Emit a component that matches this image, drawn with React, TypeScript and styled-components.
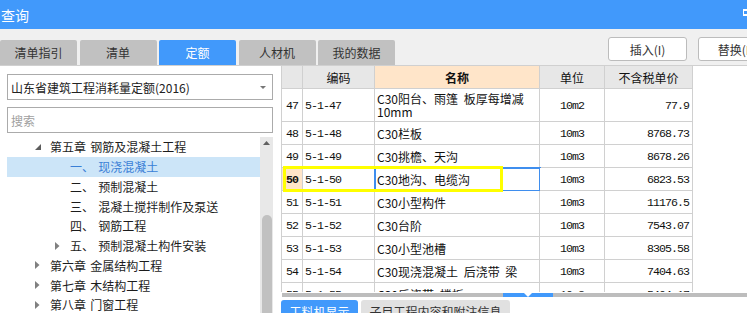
import React from 'react';
import styled, { createGlobalStyle } from 'styled-components';

const BLUE = '#4199fb';
const LINE = '#d0d0d0';

const GlobalStyle = createGlobalStyle`
  html, body {
    margin: 0;
    padding: 0;
  }

  body {
    width: 747px;
    height: 313px;
    overflow: hidden;
    background: #ffffff;
    color: #222222;
    font-family: "Noto Sans CJK SC", "Noto Sans", sans-serif;
    font-size: 12px;
  }

  * {
    box-sizing: border-box;
  }
`;

const Window = styled.div`
  width: 747px;
  height: 313px;
  display: flex;
  flex-direction: column;
  overflow: hidden;
`;

const TitleBar = styled.div`
  height: 29px;
  flex-shrink: 0;
  padding-left: 1px;

  display: flex;
  align-items: center;
  justify-content: space-between;

  background: ${BLUE};
  color: #ffffff;
  font-size: 14px;
`;

const MaxIcon = styled.span`
  width: 10px;
  height: 7px;
  margin-right: -6px;
  margin-bottom: 4px;
  border: 2px solid #ffffff;
  border-left-width: 1px;
`;

const TopBar = styled.div`
  height: 37px;
  flex-shrink: 0;
  padding-top: 11px;

  display: flex;
  align-items: flex-start;

  background: #f0f0f0;
  border-bottom: 1px solid ${LINE};
`;

const TabRow = styled.div`
  display: flex;
  gap: 2.5px;
  align-self: flex-end;
`;

const Tab = styled.div<{ $active?: boolean }>`
  width: 77px;
  height: 25px;

  display: flex;
  align-items: center;
  justify-content: center;

  border-radius: 2px 2px 0 0;
  background: ${(p) => (p.$active ? BLUE : '#c1c1c1')};
  color: ${(p) => (p.$active ? '#ffffff' : '#333333')};
  font-size: 12px;
`;

const ActionGroup = styled.div`
  margin-left: auto;
  margin-right: -30px;
  margin-top: -3px;

  display: flex;
  gap: 11px;
`;

const ActionButton = styled.div`
  width: 79px;
  height: 24px;
  flex-shrink: 0;

  display: flex;
  align-items: center;
  justify-content: center;

  background: #ffffff;
  border: 1px solid #bcbcbc;
  border-radius: 3px;
  color: #333333;
  font-size: 12px;
`;

const Body = styled.div`
  flex: 1;
  min-height: 0;
  display: flex;
`;

const LeftPanel = styled.div`
  width: 281px;
  flex-shrink: 0;
  padding: 8px 8px 0 7px;

  display: flex;
  flex-direction: column;
`;

const InputBox = styled.div<{ $placeholder?: boolean }>`
  height: 26px;
  padding: 0 6px 0 3px;

  display: flex;
  align-items: center;
  justify-content: space-between;

  border: 1px solid #ababab;
  color: ${(p) => (p.$placeholder ? '#a0a0a0' : '#222222')};
  font-size: 12px;
  white-space: nowrap;

  & + & {
    margin-top: 7px;
  }
`;

const Tree = styled.div`
  flex: 1;
  min-height: 0;
  margin-top: 4px;
  display: flex;
`;

const TreeList = styled.div`
  flex: 1;
  display: flex;
  flex-direction: column;
`;

const TreeRow = styled.div<{ $level: number; $selected?: boolean }>`
  height: 19.75px;
  flex-shrink: 0;
  padding-left: ${(p) => 28 + p.$level * 20}px;

  display: flex;
  align-items: center;

  background: ${(p) => (p.$selected ? '#cce5f8' : 'transparent')};
  color: ${(p) => (p.$selected ? '#3a7fd6' : '#1c1c1c')};
  font-size: 12px;
  word-spacing: 1.5px;
  white-space: nowrap;
`;

const Toggle = styled.span`
  width: 15px;
  flex-shrink: 0;
  display: flex;
  align-items: center;
`;

const VScroll = styled.div`
  width: 13px;
  flex-shrink: 0;
  padding-top: 2px;

  display: flex;
  flex-direction: column;
  align-items: center;

  background: #e8e8e8;
`;

const VThumb = styled.div`
  width: 10px;
  flex: 1;
  margin-top: 70px;
  margin-bottom: -10px;
  border-radius: 5px;
  background: #c1c1c1;
`;

const GridPanel = styled.div`
  flex: 1;
  min-width: 0;
  position: relative;

  display: flex;
  flex-direction: column;
`;

const GridView = styled.div`
  height: 226px;
  flex-shrink: 0;
  overflow: hidden;
`;

const GridRow = styled.div<{ $height: number }>`
  height: ${(p) => p.$height}px;
  display: grid;
  grid-template-columns: 22px 72px 165px 65px 88px;
`;

const Cell = styled.div<{
  $bg?: string;
  $align?: 'left' | 'center' | 'right';
  $mono?: boolean;
  $bold?: boolean;
  $focus?: boolean;
  $first?: boolean;
}>`
  padding: 0 ${(p) => (p.$align === 'right' ? '3px' : '1px')} 0 ${(p) => (p.$align === 'left' ? '2px' : '1px')};

  display: flex;
  align-items: center;
  justify-content: ${(p) =>
    p.$align === 'left' ? 'flex-start' : p.$align === 'right' ? 'flex-end' : 'center'};

  background: ${(p) => p.$bg || '#ffffff'};
  border-right: 1px solid ${LINE};
  border-bottom: 1px solid ${LINE};
  border-left: ${(p) => (p.$first ? `1px solid ${LINE}` : 'none')};
  outline: ${(p) => (p.$focus ? '2px solid #3f8eee' : 'none')};
  outline-offset: -1px;

  color: #111111;
  font-family: ${(p) =>
    p.$mono ? '"Liberation Mono", "Noto Sans CJK SC", monospace' : '"Noto Sans CJK SC", sans-serif'};
  font-size: ${(p) => (p.$mono ? '11.6px' : '12px')};
  letter-spacing: ${(p) => (p.$mono ? '-0.95px' : '0')};
  word-spacing: 3px;
  font-weight: ${(p) => (p.$bold ? 700 : 400)};
  line-height: 13px;
  white-space: pre-line;
`;

const HighlightFrame = styled.div`
  position: absolute;
  left: 2px;
  top: 100px;
  width: 220px;
  height: 26px;
  border: 3px solid #ffff00;
  pointer-events: none;
`;

const HScroll = styled.div`
  height: 4px;
  margin-top: 1px;
  margin-left: 1px;
  flex-shrink: 0;
  display: flex;
  background: #bdbdbd;
`;

const HThumb = styled.div`
  width: 50px;
  margin-left: 221px;
  display: flex;
  justify-content: center;
  background: ${BLUE};
`;

const BottomTabs = styled.div`
  margin-top: 3px;
  display: flex;
  gap: 3px;
`;

const BottomTab = styled.div<{ $active?: boolean; $width: number }>`
  width: ${(p) => p.$width}px;
  height: 22px;
  padding-top: 3px;

  display: flex;
  justify-content: center;

  border-radius: 3px 3px 0 0;
  background: ${(p) => (p.$active ? BLUE : '#e1e1e1')};
  color: ${(p) => (p.$active ? '#ffffff' : '#333333')};
  font-size: 12px;
`;

const Expanded = () => (
  <svg width="6" height="6" viewBox="0 0 6 6">
    <path d="M6 0 L6 6 L0 6 Z" fill="#5c5c5c" />
  </svg>
);

const Collapsed = () => (
  <svg width="5" height="8" viewBox="0 0 5 8">
    <path d="M0 0 L4.5 4 L0 8 Z" fill="#808080" />
  </svg>
);

const tabs = ['清单指引', '清单', '定额', '人材机', '我的数据'];

type TreeItem = { level: number; label: string; toggle?: 'open' | 'closed'; selected?: boolean };

const treeItems: TreeItem[] = [
  { level: 0, label: '第五章 钢筋及混凝土工程', toggle: 'open' },
  { level: 1, label: '一、 现浇混凝土', selected: true },
  { level: 1, label: '二、 预制混凝土' },
  { level: 1, label: '三、 混凝土搅拌制作及泵送' },
  { level: 1, label: '四、 钢筋工程' },
  { level: 1, label: '五、 预制混凝土构件安装', toggle: 'closed' },
  { level: 0, label: '第六章 金属结构工程', toggle: 'closed' },
  { level: 0, label: '第七章 木结构工程', toggle: 'closed' },
  { level: 0, label: '第八章 门窗工程', toggle: 'closed' },
];

type Quota = { no: number; code: string; name: string; unit: string; price: string };

const quotas: Quota[] = [
  { no: 47, code: '5-1-47', name: 'C30阳台、雨篷 板厚每增减\n10mm', unit: '10m2', price: '77.9' },
  { no: 48, code: '5-1-48', name: 'C30栏板', unit: '10m3', price: '8768.73' },
  { no: 49, code: '5-1-49', name: 'C30挑檐、天沟', unit: '10m3', price: '8678.26' },
  { no: 50, code: '5-1-50', name: 'C30地沟、电缆沟', unit: '10m3', price: '6823.53' },
  { no: 51, code: '5-1-51', name: 'C30小型构件', unit: '10m3', price: '11176.5' },
  { no: 52, code: '5-1-52', name: 'C30台阶', unit: '10m3', price: '7543.07' },
  { no: 53, code: '5-1-53', name: 'C30小型池槽', unit: '10m3', price: '8305.58' },
  { no: 54, code: '5-1-54', name: 'C30现浇混凝土 后浇带 梁', unit: '10m3', price: '7404.63' },
  { no: 55, code: '5-1-55', name: 'C30后浇带 楼板', unit: '10m3', price: '5404.17' },
];

const CURRENT = 50;
const HEAD_BG = '#e7e7e7';
const PEACH = '#ffe5c9';

export default function App() {
  return (
    <Window>
      <GlobalStyle />
      <TitleBar>
        <span>查询</span>
        <MaxIcon />
      </TitleBar>

      <TopBar>
        <TabRow>
          {tabs.map((t) => (
            <Tab key={t} $active={t === '定额'}>
              {t}
            </Tab>
          ))}
        </TabRow>
        <ActionGroup>
          <ActionButton>插入(I)</ActionButton>
          <ActionButton>替换(R)</ActionButton>
        </ActionGroup>
      </TopBar>

      <Body>
        <LeftPanel>
          <InputBox>
            <span>山东省建筑工程消耗量定额(2016)</span>
            <svg width="6" height="3" viewBox="0 0 6 3">
              <path d="M0 0 L6 0 L3 3 Z" fill="#777777" />
            </svg>
          </InputBox>
          <InputBox $placeholder>搜索</InputBox>

          <Tree>
            <TreeList>
              {treeItems.map((item) => (
                <TreeRow key={item.label} $level={item.level} $selected={item.selected}>
                  <Toggle>
                    {item.toggle === 'open' && <Expanded />}
                    {item.toggle === 'closed' && <Collapsed />}
                  </Toggle>
                  <span>{item.label}</span>
                </TreeRow>
              ))}
            </TreeList>
            <VScroll>
              <svg width="7" height="4" viewBox="0 0 7 4" style={{ marginTop: 2 }}>
                <path d="M3.5 0 L7 4 L0 4 Z" fill="#606060" />
              </svg>
              <VThumb />
            </VScroll>
          </Tree>
        </LeftPanel>

        <GridPanel>
          <GridView>
            <GridRow $height={23}>
              <Cell $first $bg={HEAD_BG} />
              <Cell $bg={HEAD_BG}>编码</Cell>
              <Cell $bg={PEACH} $bold>
                名称
              </Cell>
              <Cell $bg={HEAD_BG}>单位</Cell>
              <Cell $bg={HEAD_BG}>不含税单价</Cell>
            </GridRow>

            {quotas.map((q) => {
              const current = q.no === CURRENT;
              return (
                <GridRow key={q.no} $height={q.name.includes('\n') ? 33 : 23}>
                  <Cell $first $mono $bg={current ? PEACH : undefined} $bold={current}>
                    {q.no}
                  </Cell>
                  <Cell $mono $align="left">
                    {q.code}
                  </Cell>
                  <Cell $align="left" $focus={current}>
                    {q.name}
                  </Cell>
                  <Cell $mono>{q.unit}</Cell>
                  <Cell $mono $align="right">
                    {q.price}
                  </Cell>
                </GridRow>
              );
            })}
          </GridView>

          <HScroll>
            <HThumb>
              <svg width="8" height="4" viewBox="0 0 8 4">
                <path d="M0 0 L8 0 L4 4 Z" fill="#ffffff" />
              </svg>
            </HThumb>
          </HScroll>

          <BottomTabs>
            <BottomTab $active $width={77}>
              工料机显示
            </BottomTab>
            <BottomTab $width={149}>子目工程内容和附注信息</BottomTab>
          </BottomTabs>

          <HighlightFrame />
        </GridPanel>
      </Body>
    </Window>
  );
}
